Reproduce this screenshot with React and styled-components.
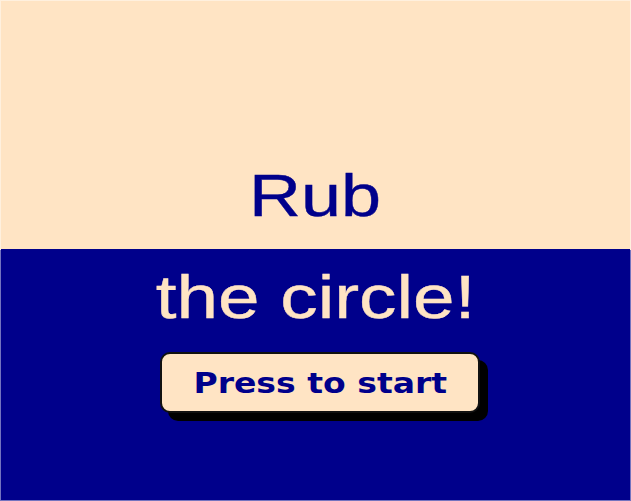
import React from "react";
import styled, { createGlobalStyle } from "styled-components";

const GlobalStyle = createGlobalStyle`
  html, body {
    margin: 0;
    padding: 0;
    background: #00008b;
  }
`;

const Screen = styled.div`
  box-sizing: border-box;
  width: 631px;
  height: 501px;
  display: flex;
  flex-direction: column;
  border: 1px solid rgba(255, 255, 255, 0.45);
  background: linear-gradient(#ffe4c4 50%, #00008b 50%);
  background-origin: border-box;
  overflow: hidden;
  font-family: "Liberation Sans", Arial, sans-serif;
`;

const Top = styled.div`
  height: 248px;
  background: #ffe4c4;
  display: flex;
  flex-direction: column;
  justify-content: flex-end;
  align-items: center;
  padding-bottom: 23px;
  box-sizing: border-box;
`;

const Bottom = styled.div`
  flex: 1;
  background: #00008b;
  display: flex;
  flex-direction: column;
  align-items: center;
  padding-top: 18px;
`;

const Word = styled.div`
  font-size: ${(p) => p.$size}px;
  line-height: ${(p) => p.$size}px;
  color: ${(p) => p.$color};
  transform: scaleX(${(p) => p.$stretch});
  -webkit-text-stroke: 0.4px ${(p) => p.$color};
  white-space: nowrap;
`;

const StartButton = styled.button`
  box-sizing: border-box;
  margin-top: 24px;
  margin-left: 9px;
  width: 320px;
  height: 61px;
  padding: 2px 0 0;
  background: #ffe4c4;
  border: 2px solid #111;
  border-radius: 10px;
  box-shadow: 8px 8px 0 #000;
  display: flex;
  align-items: center;
  justify-content: center;
  cursor: pointer;
`;

const ButtonLabel = styled.span`
  font-family: "DejaVu Sans", Verdana, sans-serif;
  font-weight: bold;
  font-size: 29px;
  line-height: 29px;
  color: #00008b;
  transform: scaleX(1.14);
  white-space: nowrap;
`;

export default function App() {
  return (
    <>
      <GlobalStyle />
      <Screen>
        <Top>
          <Word $size={60} $stretch={1.2} $color="#00008b">
            Rub
          </Word>
        </Top>
        <Bottom>
          <Word $size={61} $stretch={1.225} $color="#ffe4c4">
            the circle!
          </Word>
          <StartButton>
            <ButtonLabel>Press to start</ButtonLabel>
          </StartButton>
        </Bottom>
      </Screen>
    </>
  );
}
